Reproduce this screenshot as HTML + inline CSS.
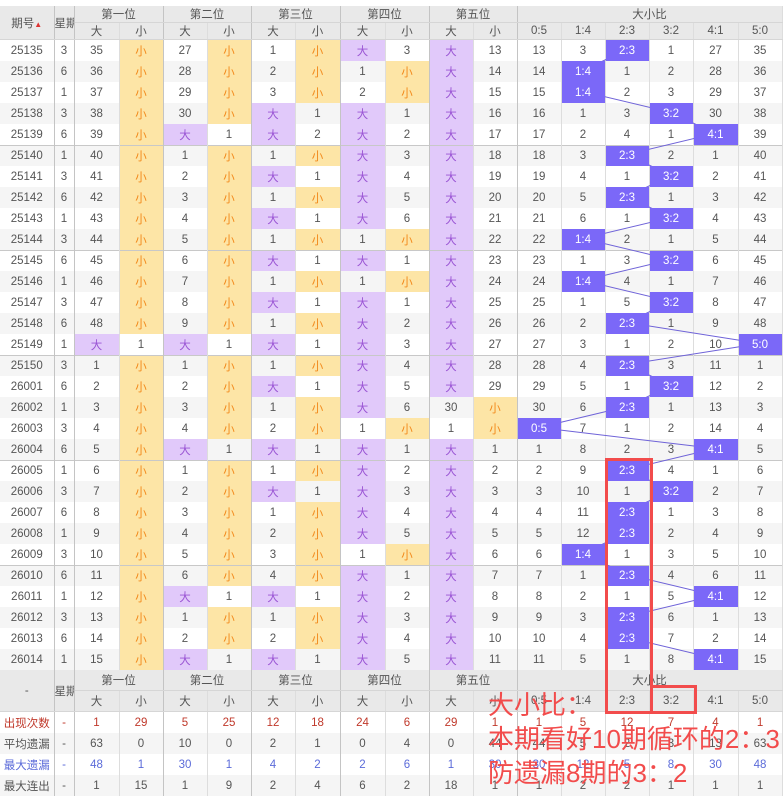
<!DOCTYPE html>
<html><head><meta charset="utf-8"><style>
body{margin:0;width:784px;height:797px;overflow:hidden;background:#fff;font-family:"Liberation Sans","Noto Sans CJK SC",sans-serif;}
#w{position:relative;width:784px;height:797px}
table{position:absolute;left:0;top:6px;border-collapse:collapse;table-layout:fixed;width:782px;font-size:11.5px;color:#555}
td,th{height:21px;padding:0;text-align:center;border-right:1px solid #ddd;overflow:hidden;white-space:nowrap;position:relative}
th{background:#e9e9e9;font-weight:normal;font-size:11.5px;color:#555;border-bottom:1px solid #d6d6d6}
tr.hd1 th{height:16px}tr.hd2 th{height:15px}
tr.fh th{height:20px}
tbody tr:nth-child(even) td{background:#f5f5f5}
td.s{background:#fde5a6 !important;color:#f28a1c}
td.b{background:#e1c9fa !important;color:#9a55d4}
td.h{background:#7b68f8 !important;color:#fff;z-index:3}
tr.g td{border-top:1px solid #c8c8c8;height:20px}
.L{border-right:1px solid #c4c4c4}
tr.st td{background:#fff}
tr.st:nth-child(even) td{background:#f5f5f5}
.r1 td{color:#c0392b}.r3 td{color:#5b6bd9}
svg{position:absolute;left:0;top:0;z-index:2;pointer-events:none}
#ov{position:absolute;left:488px;top:688px;font-size:26px;line-height:34px;color:#f24c4c;z-index:5;font-family:"Liberation Sans","Noto Sans CJK SC",sans-serif;white-space:nowrap}
</style></head><body><div id="w">
<table>
<colgroup><col style="width:54px"><col style="width:20px"><col style="width:45px"><col style="width:44px"><col style="width:44px"><col style="width:44px"><col style="width:44px"><col style="width:45px"><col style="width:45px"><col style="width:44px"><col style="width:44px"><col style="width:44px"><col style="width:44px"><col style="width:44px"><col style="width:44px"><col style="width:44px"><col style="width:45px"><col style="width:44px"></colgroup>
<thead>
<tr class="hd1"><th rowspan="2" class="L">期号<span style="color:#d33;font-size:8px">▲</span></th><th rowspan="2" class="L">星期</th><th colspan="2" class="L">第一位</th><th colspan="2" class="L">第二位</th><th colspan="2" class="L">第三位</th><th colspan="2" class="L">第四位</th><th colspan="2" class="L">第五位</th><th colspan="6">大小比</th></tr>
<tr class="hd2"><th>大</th><th class="L">小</th><th>大</th><th class="L">小</th><th>大</th><th class="L">小</th><th>大</th><th class="L">小</th><th>大</th><th class="L">小</th><th>0:5</th><th>1:4</th><th>2:3</th><th>3:2</th><th>4:1</th><th>5:0</th></tr>
</thead>
<tbody>
<tr><td class="L">25135</td><td class="L">3</td><td>35</td><td class="s L">小</td><td>27</td><td class="s L">小</td><td>1</td><td class="s L">小</td><td class="b">大</td><td class="L">3</td><td class="b">大</td><td class="L">13</td><td>13</td><td>3</td><td class="h">2:3</td><td>1</td><td>27</td><td>35</td></tr>
<tr><td class="L">25136</td><td class="L">6</td><td>36</td><td class="s L">小</td><td>28</td><td class="s L">小</td><td>2</td><td class="s L">小</td><td>1</td><td class="s L">小</td><td class="b">大</td><td class="L">14</td><td>14</td><td class="h">1:4</td><td>1</td><td>2</td><td>28</td><td>36</td></tr>
<tr><td class="L">25137</td><td class="L">1</td><td>37</td><td class="s L">小</td><td>29</td><td class="s L">小</td><td>3</td><td class="s L">小</td><td>2</td><td class="s L">小</td><td class="b">大</td><td class="L">15</td><td>15</td><td class="h">1:4</td><td>2</td><td>3</td><td>29</td><td>37</td></tr>
<tr><td class="L">25138</td><td class="L">3</td><td>38</td><td class="s L">小</td><td>30</td><td class="s L">小</td><td class="b">大</td><td class="L">1</td><td class="b">大</td><td class="L">1</td><td class="b">大</td><td class="L">16</td><td>16</td><td>1</td><td>3</td><td class="h">3:2</td><td>30</td><td>38</td></tr>
<tr><td class="L">25139</td><td class="L">6</td><td>39</td><td class="s L">小</td><td class="b">大</td><td class="L">1</td><td class="b">大</td><td class="L">2</td><td class="b">大</td><td class="L">2</td><td class="b">大</td><td class="L">17</td><td>17</td><td>2</td><td>4</td><td>1</td><td class="h">4:1</td><td>39</td></tr>
<tr class="g"><td class="L">25140</td><td class="L">1</td><td>40</td><td class="s L">小</td><td>1</td><td class="s L">小</td><td>1</td><td class="s L">小</td><td class="b">大</td><td class="L">3</td><td class="b">大</td><td class="L">18</td><td>18</td><td>3</td><td class="h">2:3</td><td>2</td><td>1</td><td>40</td></tr>
<tr><td class="L">25141</td><td class="L">3</td><td>41</td><td class="s L">小</td><td>2</td><td class="s L">小</td><td class="b">大</td><td class="L">1</td><td class="b">大</td><td class="L">4</td><td class="b">大</td><td class="L">19</td><td>19</td><td>4</td><td>1</td><td class="h">3:2</td><td>2</td><td>41</td></tr>
<tr><td class="L">25142</td><td class="L">6</td><td>42</td><td class="s L">小</td><td>3</td><td class="s L">小</td><td>1</td><td class="s L">小</td><td class="b">大</td><td class="L">5</td><td class="b">大</td><td class="L">20</td><td>20</td><td>5</td><td class="h">2:3</td><td>1</td><td>3</td><td>42</td></tr>
<tr><td class="L">25143</td><td class="L">1</td><td>43</td><td class="s L">小</td><td>4</td><td class="s L">小</td><td class="b">大</td><td class="L">1</td><td class="b">大</td><td class="L">6</td><td class="b">大</td><td class="L">21</td><td>21</td><td>6</td><td>1</td><td class="h">3:2</td><td>4</td><td>43</td></tr>
<tr><td class="L">25144</td><td class="L">3</td><td>44</td><td class="s L">小</td><td>5</td><td class="s L">小</td><td>1</td><td class="s L">小</td><td>1</td><td class="s L">小</td><td class="b">大</td><td class="L">22</td><td>22</td><td class="h">1:4</td><td>2</td><td>1</td><td>5</td><td>44</td></tr>
<tr class="g"><td class="L">25145</td><td class="L">6</td><td>45</td><td class="s L">小</td><td>6</td><td class="s L">小</td><td class="b">大</td><td class="L">1</td><td class="b">大</td><td class="L">1</td><td class="b">大</td><td class="L">23</td><td>23</td><td>1</td><td>3</td><td class="h">3:2</td><td>6</td><td>45</td></tr>
<tr><td class="L">25146</td><td class="L">1</td><td>46</td><td class="s L">小</td><td>7</td><td class="s L">小</td><td>1</td><td class="s L">小</td><td>1</td><td class="s L">小</td><td class="b">大</td><td class="L">24</td><td>24</td><td class="h">1:4</td><td>4</td><td>1</td><td>7</td><td>46</td></tr>
<tr><td class="L">25147</td><td class="L">3</td><td>47</td><td class="s L">小</td><td>8</td><td class="s L">小</td><td class="b">大</td><td class="L">1</td><td class="b">大</td><td class="L">1</td><td class="b">大</td><td class="L">25</td><td>25</td><td>1</td><td>5</td><td class="h">3:2</td><td>8</td><td>47</td></tr>
<tr><td class="L">25148</td><td class="L">6</td><td>48</td><td class="s L">小</td><td>9</td><td class="s L">小</td><td>1</td><td class="s L">小</td><td class="b">大</td><td class="L">2</td><td class="b">大</td><td class="L">26</td><td>26</td><td>2</td><td class="h">2:3</td><td>1</td><td>9</td><td>48</td></tr>
<tr><td class="L">25149</td><td class="L">1</td><td class="b">大</td><td class="L">1</td><td class="b">大</td><td class="L">1</td><td class="b">大</td><td class="L">1</td><td class="b">大</td><td class="L">3</td><td class="b">大</td><td class="L">27</td><td>27</td><td>3</td><td>1</td><td>2</td><td>10</td><td class="h">5:0</td></tr>
<tr class="g"><td class="L">25150</td><td class="L">3</td><td>1</td><td class="s L">小</td><td>1</td><td class="s L">小</td><td>1</td><td class="s L">小</td><td class="b">大</td><td class="L">4</td><td class="b">大</td><td class="L">28</td><td>28</td><td>4</td><td class="h">2:3</td><td>3</td><td>11</td><td>1</td></tr>
<tr><td class="L">26001</td><td class="L">6</td><td>2</td><td class="s L">小</td><td>2</td><td class="s L">小</td><td class="b">大</td><td class="L">1</td><td class="b">大</td><td class="L">5</td><td class="b">大</td><td class="L">29</td><td>29</td><td>5</td><td>1</td><td class="h">3:2</td><td>12</td><td>2</td></tr>
<tr><td class="L">26002</td><td class="L">1</td><td>3</td><td class="s L">小</td><td>3</td><td class="s L">小</td><td>1</td><td class="s L">小</td><td class="b">大</td><td class="L">6</td><td>30</td><td class="s L">小</td><td>30</td><td>6</td><td class="h">2:3</td><td>1</td><td>13</td><td>3</td></tr>
<tr><td class="L">26003</td><td class="L">3</td><td>4</td><td class="s L">小</td><td>4</td><td class="s L">小</td><td>2</td><td class="s L">小</td><td>1</td><td class="s L">小</td><td>1</td><td class="s L">小</td><td class="h">0:5</td><td>7</td><td>1</td><td>2</td><td>14</td><td>4</td></tr>
<tr><td class="L">26004</td><td class="L">6</td><td>5</td><td class="s L">小</td><td class="b">大</td><td class="L">1</td><td class="b">大</td><td class="L">1</td><td class="b">大</td><td class="L">1</td><td class="b">大</td><td class="L">1</td><td>1</td><td>8</td><td>2</td><td>3</td><td class="h">4:1</td><td>5</td></tr>
<tr class="g"><td class="L">26005</td><td class="L">1</td><td>6</td><td class="s L">小</td><td>1</td><td class="s L">小</td><td>1</td><td class="s L">小</td><td class="b">大</td><td class="L">2</td><td class="b">大</td><td class="L">2</td><td>2</td><td>9</td><td class="h">2:3</td><td>4</td><td>1</td><td>6</td></tr>
<tr><td class="L">26006</td><td class="L">3</td><td>7</td><td class="s L">小</td><td>2</td><td class="s L">小</td><td class="b">大</td><td class="L">1</td><td class="b">大</td><td class="L">3</td><td class="b">大</td><td class="L">3</td><td>3</td><td>10</td><td>1</td><td class="h">3:2</td><td>2</td><td>7</td></tr>
<tr><td class="L">26007</td><td class="L">6</td><td>8</td><td class="s L">小</td><td>3</td><td class="s L">小</td><td>1</td><td class="s L">小</td><td class="b">大</td><td class="L">4</td><td class="b">大</td><td class="L">4</td><td>4</td><td>11</td><td class="h">2:3</td><td>1</td><td>3</td><td>8</td></tr>
<tr><td class="L">26008</td><td class="L">1</td><td>9</td><td class="s L">小</td><td>4</td><td class="s L">小</td><td>2</td><td class="s L">小</td><td class="b">大</td><td class="L">5</td><td class="b">大</td><td class="L">5</td><td>5</td><td>12</td><td class="h">2:3</td><td>2</td><td>4</td><td>9</td></tr>
<tr><td class="L">26009</td><td class="L">3</td><td>10</td><td class="s L">小</td><td>5</td><td class="s L">小</td><td>3</td><td class="s L">小</td><td>1</td><td class="s L">小</td><td class="b">大</td><td class="L">6</td><td>6</td><td class="h">1:4</td><td>1</td><td>3</td><td>5</td><td>10</td></tr>
<tr class="g"><td class="L">26010</td><td class="L">6</td><td>11</td><td class="s L">小</td><td>6</td><td class="s L">小</td><td>4</td><td class="s L">小</td><td class="b">大</td><td class="L">1</td><td class="b">大</td><td class="L">7</td><td>7</td><td>1</td><td class="h">2:3</td><td>4</td><td>6</td><td>11</td></tr>
<tr><td class="L">26011</td><td class="L">1</td><td>12</td><td class="s L">小</td><td class="b">大</td><td class="L">1</td><td class="b">大</td><td class="L">1</td><td class="b">大</td><td class="L">2</td><td class="b">大</td><td class="L">8</td><td>8</td><td>2</td><td>1</td><td>5</td><td class="h">4:1</td><td>12</td></tr>
<tr><td class="L">26012</td><td class="L">3</td><td>13</td><td class="s L">小</td><td>1</td><td class="s L">小</td><td>1</td><td class="s L">小</td><td class="b">大</td><td class="L">3</td><td class="b">大</td><td class="L">9</td><td>9</td><td>3</td><td class="h">2:3</td><td>6</td><td>1</td><td>13</td></tr>
<tr><td class="L">26013</td><td class="L">6</td><td>14</td><td class="s L">小</td><td>2</td><td class="s L">小</td><td>2</td><td class="s L">小</td><td class="b">大</td><td class="L">4</td><td class="b">大</td><td class="L">10</td><td>10</td><td>4</td><td class="h">2:3</td><td>7</td><td>2</td><td>14</td></tr>
<tr><td class="L">26014</td><td class="L">1</td><td>15</td><td class="s L">小</td><td class="b">大</td><td class="L">1</td><td class="b">大</td><td class="L">1</td><td class="b">大</td><td class="L">5</td><td class="b">大</td><td class="L">11</td><td>11</td><td>5</td><td>1</td><td>8</td><td class="h">4:1</td><td>15</td></tr>
</tbody>
<tbody>
<tr class="fh"><th rowspan="2" class="L">-</th><th rowspan="2" class="L">星期</th><th colspan="2" class="L">第一位</th><th colspan="2" class="L">第二位</th><th colspan="2" class="L">第三位</th><th colspan="2" class="L">第四位</th><th colspan="2" class="L">第五位</th><th colspan="6">大小比</th></tr>
<tr class="fh"><th>大</th><th class="L">小</th><th>大</th><th class="L">小</th><th>大</th><th class="L">小</th><th>大</th><th class="L">小</th><th>大</th><th class="L">小</th><th>0:5</th><th>1:4</th><th>2:3</th><th>3:2</th><th>4:1</th><th>5:0</th></tr>
</tbody>
<tbody class="stb">
<tr class="st r1"><td class="L">出现次数</td><td class="L">-</td><td>1</td><td class="L">29</td><td>5</td><td class="L">25</td><td>12</td><td class="L">18</td><td>24</td><td class="L">6</td><td>29</td><td class="L">1</td><td>1</td><td>5</td><td>12</td><td>7</td><td>4</td><td>1</td></tr>
<tr class="st"><td class="L">平均遗漏</td><td class="L">-</td><td>63</td><td class="L">0</td><td>10</td><td class="L">0</td><td>2</td><td class="L">1</td><td>0</td><td class="L">4</td><td>0</td><td class="L">44</td><td>44</td><td>5</td><td>2</td><td>3</td><td>13</td><td>63</td></tr>
<tr class="st r3"><td class="L">最大遗漏</td><td class="L">-</td><td>48</td><td class="L">1</td><td>30</td><td class="L">1</td><td>4</td><td class="L">2</td><td>2</td><td class="L">6</td><td>1</td><td class="L">30</td><td>30</td><td>12</td><td>5</td><td>8</td><td>30</td><td>48</td></tr>
<tr class="st"><td class="L">最大连出</td><td class="L">-</td><td>1</td><td class="L">15</td><td>1</td><td class="L">9</td><td>2</td><td class="L">4</td><td>6</td><td class="L">2</td><td>18</td><td class="L">1</td><td>1</td><td>2</td><td>2</td><td>1</td><td>1</td><td>1</td></tr>
</tbody>
</table>
<svg width="784" height="797"><polyline fill="none" stroke="#6f63d8" stroke-width="1" points="627,49.5 583,70.5 583,91.5 671,112.5 715,133.5 627,154.5 671,175.5 627,196.5 671,217.5 583,238.5 671,259.5 583,280.5 671,301.5 627,322.5 760,343.5 627,364.5 671,385.5 627,406.5 539,427.5 715,448.5 627,469.5 671,490.5 627,511.5 627,532.5 583,553.5 627,574.5 715,595.5 627,616.5 627,637.5 715,658.5"/></svg>
<svg width="784" height="797" style="z-index:6"><rect x="606.5" y="459.5" width="45" height="253" fill="none" stroke="#f24c4c" stroke-width="3"/><rect x="651.5" y="686.5" width="44" height="26" fill="none" stroke="#f24c4c" stroke-width="3"/></svg>
<div id="ov">大小比：<br>本期看好10期循环的2：3<br>防遗漏8期的3：2</div>
</div></body></html>
